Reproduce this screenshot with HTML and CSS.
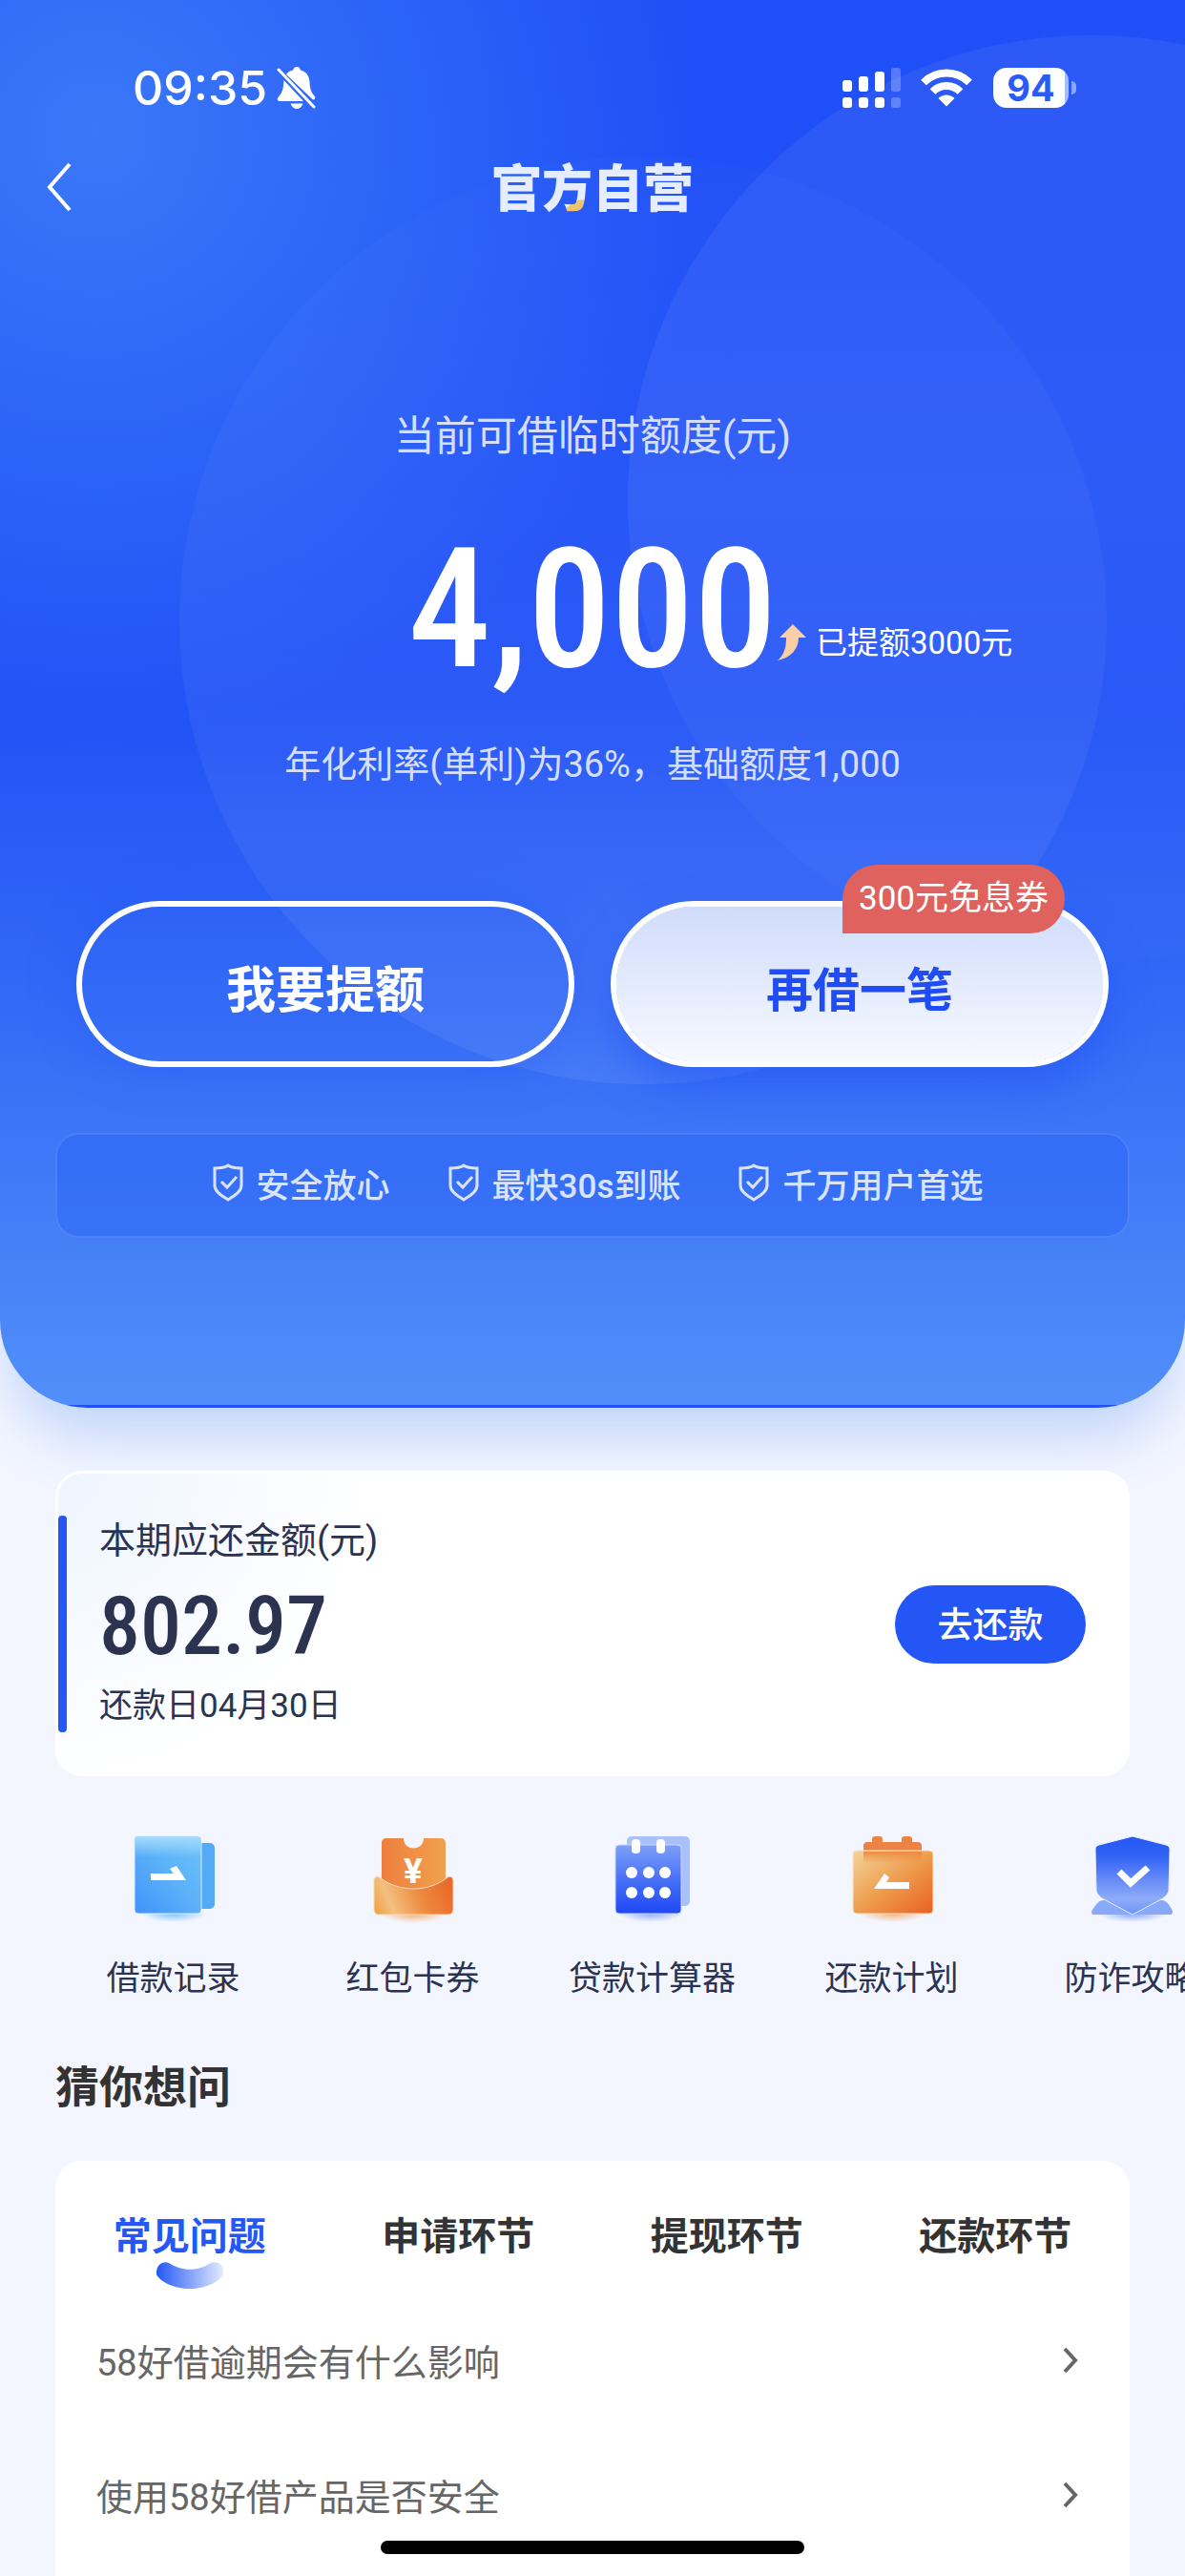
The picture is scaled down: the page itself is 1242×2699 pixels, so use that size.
FILE: index.html
```html
<!DOCTYPE html>
<html lang="zh-CN">
<head>
    <meta charset="UTF-8">
    <meta name="viewport" content="width=device-width, initial-scale=1.0">
    <title>官方自营</title>
    <link rel="stylesheet" href="styles.css">
</head>
<body>
    <div class="page">
        <header class="hero">
            <div class="status-bar">
                <div class="status-left">
                    <span class="time">09:35</span>
                    <svg class="bell" width="42" height="44" viewBox="0 0 42 44">
                        <path fill="#fff" d="M10 8C12 5 15 4 17 3.500C18 1 19 0 21 0s3 1 4 3.500c6 1.500 9 6 9.500 12c.500 8 1.500 11 5 15c1 1.500 1 3 0 3.500L38 34.500z"/>
                        <path fill="#fff" d="M7.500 14L28 36H3.500C1 36 0 34 1.500 32c4-4.500 5.500-8 6-18z"/>
                        <path fill="#fff" d="M14.500 38.500h13c-1 3.500-3.500 5.500-6.500 5.500s-5.500-2-6.500-5.500z"/>
                        <path stroke="#fff" stroke-width="3" stroke-linecap="round" d="M2 3l37 39"/>
                    </svg>
                </div>
                <div class="status-right">
                    <svg width="62" height="43" viewBox="0 0 62 43" fill="#fff">
                        <rect x="0" y="13" width="10" height="12" rx="3"/>
                        <rect x="17" y="9" width="10" height="16" rx="3"/>
                        <rect x="34" y="4" width="10" height="21" rx="3"/>
                        <rect x="51" y="0" width="10" height="25" rx="3" opacity=".25"/>
                        <rect x="0" y="31" width="10" height="11" rx="3"/>
                        <rect x="17" y="31" width="10" height="11" rx="3"/>
                        <rect x="34" y="31" width="10" height="11" rx="3"/>
                        <rect x="51" y="31" width="10" height="11" rx="3" opacity=".25"/>
                    </svg>
                    <svg class="wifi" width="54" height="40" viewBox="0 0 54 40">
                        <path fill="none" stroke="#fff" stroke-width="8" d="M3 14.500a34 34 0 0 1 48 0"/>
                        <path fill="none" stroke="#fff" stroke-width="8" d="M12.500 24a20.500 20.500 0 0 1 29 0"/>
                        <path fill="#fff" d="M27 39.500l-8.500-8.500a12 12 0 0 1 17 0z"/>
                    </svg>
                    <div class="battery">94</div>
                </div>
            </div>

            <nav class="nav-bar">
                <a class="back" href="#" aria-label="返回">
                    <svg width="28" height="54" viewBox="0 0 28 54">
                        <path fill="none" stroke="#fff" stroke-width="4" d="M25 3L4 27l21 24"/>
                    </svg>
                </a>
                <h1>官<span class="accent">方</span>自营</h1>
            </nav>

            <p class="quota-label">当前可借临时额度(元)</p>
            <div class="quota">
                <span class="quota-value">4,000</span>
                <span class="quota-raise">
                    <svg width="32" height="40" viewBox="0 0 32 40">
                        <path fill="#fbcfa6" d="M17 0l14 14h-8c0 12-8 21-22 24c7-6 9-14 9-24H3z"/>
                    </svg>
                    已提额3000元
                </span>
            </div>
            <p class="rate">年化利率(单利)为36%，基础额度1,000</p>

            <div class="actions">
                <button class="btn-outline" type="button">我要提额</button>
                <button class="btn-solid" type="button">再借一笔<span class="coupon">300元免息券</span></button>
            </div>

            <ul class="promises">
                <li><svg width="34" height="40" viewBox="0 0 34 40"><path d="M17 2c4 3 9 3 14 3v18c0 6-6 10-14 15C9 33 3 29 3 23V5c5 0 10 0 14-3z"/><path d="M10 19l6 6 10-11"/></svg>安全放心</li>
                <li><svg width="34" height="40" viewBox="0 0 34 40"><path d="M17 2c4 3 9 3 14 3v18c0 6-6 10-14 15C9 33 3 29 3 23V5c5 0 10 0 14-3z"/><path d="M10 19l6 6 10-11"/></svg>最快30s到账</li>
                <li><svg width="34" height="40" viewBox="0 0 34 40"><path d="M17 2c4 3 9 3 14 3v18c0 6-6 10-14 15C9 33 3 29 3 23V5c5 0 10 0 14-3z"/><path d="M10 19l6 6 10-11"/></svg>千万用户首选</li>
            </ul>
        </header>

        <section class="repay">
            <div class="repay-info">
                <p class="repay-title">本期应还金额(元)</p>
                <p class="repay-amount">802.97</p>
                <p class="repay-date">还款日04月30日</p>
            </div>
            <button class="btn-repay" type="button">去还款</button>
        </section>

        <nav class="menu">
            <a href="#">
                <svg width="90" height="96" viewBox="0 0 90 96">
                    <defs>
                        <linearGradient id="book" x1="0" y1="1" x2="1" y2="0"><stop offset="0" stop-color="#3f93fb"/><stop offset=".5" stop-color="#5bb0f8"/><stop offset="1" stop-color="#6cc4f9"/></linearGradient>
                        <linearGradient id="bookTop" x1="0" y1="0" x2="0" y2="1"><stop offset="0" stop-color="#a5dcfc"/><stop offset="1" stop-color="#a5dcfc" stop-opacity="0"/></linearGradient>
                        <radialGradient id="glowSky"><stop offset="0" stop-color="#7cc2fb"/><stop offset="1" stop-color="#7cc2fb" stop-opacity="0"/></radialGradient>
                    </defs>
                    <ellipse cx="45" cy="85" rx="34" ry="9" fill="url(#glowSky)"/>
                    <rect x="60" y="11" width="28" height="69" rx="5" fill="#55aaf6"/>
                    <rect x="4" y="4" width="70" height="81" rx="4" fill="url(#book)" stroke="#d9efff"/>
                    <rect x="4" y="4" width="69" height="22" rx="4" fill="url(#bookTop)"/>
                    <path fill="#fff" d="M21 50v-7h24l-4-5 7-3 10 15z"/>
                </svg>
                借款记录
            </a>
            <a href="#">
                <svg width="90" height="96" viewBox="0 0 90 96">
                    <defs>
                        <linearGradient id="ticket"><stop offset="0" stop-color="#ee7f3e"/><stop offset="1" stop-color="#f0a14d"/></linearGradient>
                        <linearGradient id="pocket" x1="0" y1=".7" x2="1" y2=".5"><stop offset="0" stop-color="#f0a54f"/><stop offset=".2" stop-color="#f3c080"/><stop offset=".6" stop-color="#ee8a3f"/><stop offset="1" stop-color="#ea6a2b"/></linearGradient>
                        <radialGradient id="glowOrange"><stop offset="0" stop-color="#f7b27c"/><stop offset="1" stop-color="#f7b27c" stop-opacity="0"/></radialGradient>
                    </defs>
                    <ellipse cx="46" cy="86" rx="34" ry="9" fill="url(#glowOrange)"/>
                    <path fill="url(#ticket)" d="M17 6h18c0 14 21 14 21 0h18c3 0 5 2 5 5v55H12V11c0-3 2-5 5-5z"/>
                    <path fill="url(#pocket)" stroke="#f9d9b8" d="M4 50c0-3 3-5 6-3c20 16 51 16 71 0c3-2 6 0 6 3v30c0 4-2 6-6 6H10c-4 0-6-2-6-6z"/>
                    <text class="yen" x="45" y="53" text-anchor="middle">¥</text>
                </svg>
                红包卡券
            </a>
            <a href="#">
                <svg width="90" height="96" viewBox="0 0 90 96">
                    <defs>
                        <linearGradient id="calc" x1="0" y1="0" x2="0" y2="1"><stop offset="0" stop-color="#7d9ff8"/><stop offset=".6" stop-color="#3f68f6"/><stop offset="1" stop-color="#1f48f5"/></linearGradient>
                        <radialGradient id="glowBlue"><stop offset="0" stop-color="#8fabfb"/><stop offset="1" stop-color="#8fabfb" stop-opacity="0"/></radialGradient>
                    </defs>
                    <ellipse cx="43" cy="85" rx="34" ry="9" fill="url(#glowBlue)"/>
                    <rect x="18" y="4" width="66" height="73" rx="5" fill="#a9c1fb"/>
                    <rect x="6" y="13" width="69" height="72" rx="4" fill="url(#calc)" stroke="#c9d7fd"/>
                    <g fill="#fff">
                        <rect x="23" y="7" width="9" height="15" rx="4"/>
                        <rect x="49" y="7" width="9" height="15" rx="4"/>
                        <circle cx="23" cy="42" r="6"/><circle cx="41" cy="42" r="6"/><circle cx="58" cy="42" r="6"/>
                        <circle cx="23" cy="63" r="6"/><circle cx="41" cy="63" r="6"/><circle cx="58" cy="63" r="6"/>
                    </g>
                </svg>
                贷款计算器
            </a>
            <a href="#">
                <svg width="90" height="96" viewBox="0 0 90 96">
                    <defs>
                        <linearGradient id="plan" x1="0" y1="0" x2="1" y2="1"><stop offset="0" stop-color="#f3d49c"/><stop offset=".5" stop-color="#ee9d4e"/><stop offset="1" stop-color="#ea5f25"/></linearGradient>
                        <linearGradient id="planTop" x1="0" y1="0" x2="0" y2="1"><stop offset="0" stop-color="#ee8a3f"/><stop offset="1" stop-color="#ee8a3f" stop-opacity="0"/></linearGradient>
                    </defs>
                    <ellipse cx="46" cy="85" rx="36" ry="9" fill="url(#glowOrange)"/>
                    <path fill="#ed8342" d="M19 10h5V7c0-2 1-3 3-3h5c2 0 3 1 3 3v3h20V7c0-2 1-3 3-3h5c2 0 3 1 3 3v3h6c3 0 4 2 4 4v14H15V14c0-2 1-4 4-4z"/>
                    <rect x="4" y="19" width="84" height="66" rx="4" fill="url(#plan)" stroke="#f9e2c4"/>
                    <rect x="15" y="20" width="61" height="12" fill="url(#planTop)"/>
                    <path fill="#fff" d="M26 59l11-16 5 4-3 5h24v7z"/>
                </svg>
                还款计划
            </a>
            <a href="#">
                <svg width="90" height="96" viewBox="0 0 90 96">
                    <defs>
                        <linearGradient id="shield" x1="0" y1="0" x2="0" y2="1"><stop offset="0" stop-color="#2458f5"/><stop offset=".25" stop-color="#3163f5"/><stop offset=".8" stop-color="#8fabf8"/><stop offset="1" stop-color="#6a94f8"/></linearGradient>
                    </defs>
                    <ellipse cx="46" cy="86" rx="36" ry="8" fill="url(#glowBlue)"/>
                    <path fill="#88a9f9" d="M15 71h62c5 0 10 8 11 12c0 2-1 3-2 3H5c-1 0-2-1-2-3c2-4 7-12 12-12z"/>
                    <path fill="url(#shield)" stroke="#e6edff" d="M46 4l35 9c3 1 4 2 4 5l-1 42c0 3-3 7-6 9L46 86 14 69c-3-2-6-6-6-9L7 18c0-3 1-4 4-5z"/>
                    <path fill="none" stroke="#fff" stroke-width="7" d="M32 41l12 12 18-16"/>
                </svg>
                防诈攻略
            </a>
        </nav>

        <h2>猜你想问</h2>

        <section class="faq">
            <div class="tabs">
                <button class="tab active" type="button">常见问题
                    <svg width="70" height="28" viewBox="0 0 70 28">
                        <defs>
                            <linearGradient id="smile"><stop offset="0" stop-color="#2458f6"/><stop offset="1" stop-color="#e4ebfe"/></linearGradient>
                        </defs>
                        <path fill="url(#smile)" d="M13 1c13 9 31 9 44 0c8-3 15 4 13 12C66 21 51 28 35 28S4 21 0 13C-1 4 6-2 13 1z"/>
                    </svg>
                </button>
                <button class="tab" type="button">申请环节</button>
                <button class="tab" type="button">提现环节</button>
                <button class="tab" type="button">还款环节</button>
            </div>
            <ul class="questions">
                <li><a href="#">58好借逾期会有什么影响<svg width="18" height="28" viewBox="0 0 18 28"><path d="M3 2l11 12L3 26"/></svg></a></li>
                <li><a href="#">使用58好借产品是否安全<svg width="18" height="28" viewBox="0 0 18 28"><path d="M3 2l11 12L3 26"/></svg></a></li>
            </ul>
        </section>
    </div>
    <div class="home-indicator"></div>
</body>
</html>
```
FILE: styles.css
```css
* {
    box-sizing: border-box;
}
body {
    margin: 0;
    font-family: Roboto, "Noto Sans CJK SC", sans-serif;
    background-color: #f3f6ff;
    color: #2b3350;
}
h1, h2, p, ul {
    margin: 0;
    padding: 0;
}
ul {
    list-style: none;
}
a {
    color: inherit;
    text-decoration: none;
}
button {
    padding: 0;
    border: none;
    background: none;
    font-family: inherit;
    cursor: pointer;
}
.page {
    display: flex;
    flex-direction: column;
    min-height: 100vh;
    overflow: hidden;
}

/* Hero */
.hero {
    position: relative;
    z-index: 0;
    padding-bottom: 178px;
    border-radius: 0 0 92px 92px;
    background:
        linear-gradient(#1f50f6, #1f50f6) bottom / 100% 3px no-repeat,
        radial-gradient(circle at 100px 140px, #3a78f8 0, rgba(58, 120, 248, 0) 640px),
        linear-gradient(180deg, #1f4ff6 0%, #2152f6 50%, #346bf6 72%, #528ff9 100%);
    box-shadow: 0 40px 60px -10px rgba(80, 135, 240, 0.3);
    color: #fff;
    text-align: center;
    overflow: hidden;
}
.hero::before, .hero::after {
    content: "";
    position: absolute;
    z-index: -1;
    width: 972px;
    height: 972px;
    border-radius: 50%;
}
.hero::before {
    top: 164px;
    left: 50%;
    margin-left: -433px;
    background: linear-gradient(180deg, rgba(255, 255, 255, 0.01) 0%, rgba(255, 255, 255, 0.07) 100%);
}
/* the second ring runs off the right edge */
.hero::after {
    top: 37px;
    right: -388px;
    background: linear-gradient(180deg, rgba(255, 255, 255, 0.06) 0%, rgba(255, 255, 255, 0.06) 50%, rgba(255, 255, 255, 0.01) 100%);
}
.status-bar {
    display: flex;
    justify-content: space-between;
    align-items: center;
    height: 140px;
    padding: 62px 113px 18px 139px;
}
.status-left, .status-right {
    display: flex;
    align-items: center;
}
.time {
    margin-right: 10px;
    font-family: Inter, sans-serif;
    font-size: 50px;
    font-weight: 500;
}
.wifi {
    margin: 0 22px 0 20px;
}
.battery {
    position: relative;
    width: 79px;
    height: 42px;
    margin-right: 9px;
    border-radius: 14px;
    background: linear-gradient(90deg, #fff 75px, #a6bcfb 75px);
    color: #2b5bf6;
    font-family: Inter, sans-serif;
    font-size: 38px;
    font-weight: 700;
    line-height: 42px;
}
.battery::after {
    content: "";
    position: absolute;
    top: 14px;
    right: -8px;
    width: 5px;
    height: 14px;
    border-radius: 0 5px 5px 0;
    background-color: #8da9fa;
}
.nav-bar {
    position: relative;
    display: flex;
    justify-content: center;
    align-items: center;
    height: 112px;
}
.back {
    position: absolute;
    left: 48px;
    height: 54px;
}
h1 {
    padding-top: 6px;
    color: #e6edfe;
    font-size: 53px;
    font-weight: 900;
    line-height: 60px;
}
.accent {
    background: radial-gradient(circle at 42px 60px, #ecc273 18px, #e6edfe 19px);
    background-clip: text;
    -webkit-background-clip: text;
    color: transparent;
}
.quota-label {
    margin-top: 175px;
    font-size: 43px;
    line-height: 60px;
    color: #d5dffd;
}
.quota {
    position: relative;
    margin-top: 77px;
}
.quota-value {
    display: block;
    font-family: "Roboto Condensed", Roboto, sans-serif;
    font-size: 174px;
    font-weight: 500;
    line-height: 150px;
}
.quota-raise {
    position: absolute;
    left: 50%;
    bottom: 16px;
    display: flex;
    align-items: center;
    gap: 9px;
    margin-left: 193px;
    font-size: 33px;
    line-height: 48px;
}
.rate {
    margin-top: 59px;
    font-size: 38px;
    line-height: 56px;
    color: #d5dffd;
}
.actions {
    display: flex;
    gap: 38px;
    margin: 115px 80px 0;
}
.btn-outline, .btn-solid {
    position: relative;
    flex: 1;
    height: 174px;
    padding-top: 4px;
    border: 6px solid #fff;
    border-radius: 87px;
    font-weight: 700;
}
.btn-outline {
    color: #fff;
    font-size: 52px;
    box-shadow: 0 0 50px rgba(31, 80, 246, 0.35);
}
.btn-solid {
    background: linear-gradient(180deg, #d0dcfb, #f7f9ff) padding-box #fff;
    color: #1f4cf5;
    font-size: 49px;
    box-shadow: 0 20px 40px rgba(31, 80, 246, 0.5);
}
.coupon {
    position: absolute;
    top: -44px;
    right: 40px;
    padding: 0 17px;
    border-radius: 36px 36px 36px 0;
    background-color: #df625f;
    color: #fff;
    font-size: 35px;
    font-weight: 400;
    line-height: 72px;
}
.promises {
    display: flex;
    justify-content: center;
    align-items: center;
    gap: 60px;
    height: 110px;
    margin: 69px 58px 0;
    padding: 0 0 6px 10px;
    border: 2px solid rgba(255, 255, 255, 0.12);
    border-radius: 24px;
    background-color: rgba(31, 86, 246, 0.3);
    color: #d9e3fe;
    font-size: 35px;
    font-weight: 500;
}
.promises li {
    display: flex;
    align-items: center;
    gap: 13px;
}
.promises svg, .questions svg {
    fill: none;
    stroke: #d9e3fe;
    stroke-width: 3;
}

/* Repayment card */
.repay {
    position: relative;
    z-index: 1;
    display: flex;
    justify-content: space-between;
    align-items: center;
    margin: 66px 58px 0;
    padding: 44px 43px 43px 0;
    border: 3px solid #fff;
    border-radius: 28px;
    background: radial-gradient(circle at 0 0, #eef5ff 0, #fff 330px);
}
.repay-info {
    position: relative;
    padding-left: 43px;
}
.repay-info::before {
    content: "";
    position: absolute;
    top: 0;
    bottom: 0;
    left: 0;
    width: 9px;
    border-radius: 4px;
    background-color: #2458f6;
}
.repay-title {
    font-size: 38px;
    line-height: 52px;
}
.repay-amount {
    margin: 20px 0 13px;
    font-family: "Roboto Condensed", Roboto, sans-serif;
    font-size: 86px;
    font-weight: 500;
    line-height: 88px;
}
.repay-date {
    font-size: 35px;
    line-height: 54px;
}
.btn-repay {
    width: 200px;
    height: 82px;
    padding-bottom: 4px;
    border-radius: 41px;
    background-color: #2456f5;
    color: #fff;
    font-size: 37px;
    font-weight: 500;
}

.menu {
    display: flex;
    margin: 59px 0 0 56px;
    overflow: hidden;
}
.menu a {
    flex: 0 0 251px;
    display: flex;
    flex-direction: column;
    align-items: center;
    gap: 33px;
    font-size: 35px;
    line-height: 50px;
}
.yen {
    fill: #fff;
    font-size: 37px;
    font-weight: 700;
}

/* FAQ */
h2 {
    margin: 58px 58px 47px;
    color: #333;
    font-size: 46px;
    font-weight: 700;
    line-height: 60px;
}
.faq {
    flex: 1;
    margin: 0 58px;
    padding-top: 53px;
    border-radius: 28px 28px 0 0;
    background-color: #fff;
}
.tabs {
    display: flex;
    margin-bottom: 31px;
}
.tab {
    position: relative;
    flex: 1;
    color: #333;
    font-size: 40px;
    font-weight: 700;
    line-height: 54px;
}
.tab.active {
    color: #2458f6;
}
.tab svg {
    position: absolute;
    top: 53px;
    left: 50%;
    margin-left: -35px;
}
.questions a {
    display: flex;
    justify-content: space-between;
    align-items: center;
    height: 141px;
    padding: 0 53px 0 43px;
    color: #666;
    font-size: 38px;
}
.questions svg {
    stroke: #666;
    stroke-width: 4;
}
.home-indicator {
    position: fixed;
    left: 50%;
    bottom: 23px;
    width: 444px;
    height: 14px;
    margin-left: -222px;
    border-radius: 7px;
    background-color: #000;
}
```
